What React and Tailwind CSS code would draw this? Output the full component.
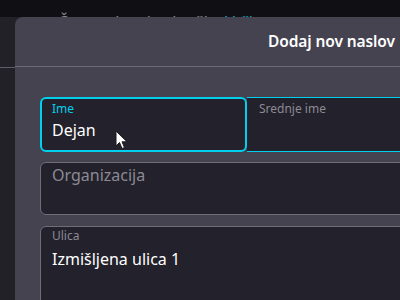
import React from 'react'

function Field({ label, value, placeholder, active, className = '' }) {
  return (
    <div
      className={`flex flex-col bg-[#23212b] rounded-md ${active ? 'border-2 border-[#00cfee] px-[10px] pt-[2px]' : 'border border-[#6f6d78] px-[11px] pt-px'} ${className}`}
    >
      {label && (
        <span className={`text-[12px] leading-[16px] ${active ? 'text-[#00cfee]' : 'text-[#8c8a94]'}`}>{label}</span>
      )}
      {value && (
        <span className={`${active ? 'mt-[2px]' : 'mt-[4px]'} text-[16px] leading-[22px] text-white`}>{value}</span>
      )}
      {placeholder && <span className="text-[16px] leading-[22px] text-[#8c8a94]">{placeholder}</span>}
    </div>
  )
}

function Cursor() {
  return (
    <svg className="absolute left-[115px] top-[130px]" width="16" height="22" viewBox="0 0 16 22">
      <path d="M1 1 L1 16 L4.5 12.5 L7 18.5 L9.5 17.5 L7 11.8 L12 11.8 Z" fill="#ffffff" stroke="#1a1a1a" strokeWidth="1" strokeLinejoin="round" />
    </svg>
  )
}

export default function App() {
  return (
    <div
      className="relative w-[400px] h-[300px] overflow-hidden bg-[#222128]"
      style={{ fontFamily: '"Noto Sans", "Open Sans", sans-serif' }}
    >
      {/* page behind the dialog */}
      <div className="h-[17px] bg-[#0f0f14] overflow-hidden">
        <div className="pl-[58px] pt-[14px] text-[16px] leading-none text-[#8a8a92] whitespace-nowrap">
          Čez naslovnico bo šla: <span className="text-[#0aa6b8]">Vrčkova</span>
        </div>
      </div>
      <div className="h-[50px]" />
      <div className="border-t border-[#5e5c66]" />

      {/* dialog */}
      <div className="absolute left-[15px] top-[17px] w-[520px] h-[320px] rounded-tl-lg bg-[#45434f]">
        <div className="h-[50px] border-b border-[#6b6975] flex items-center pl-[253px]">
          <span className="text-[15.5px] font-semibold text-white tracking-[-0.1px]">Dodaj nov naslov</span>
        </div>
        <div className="pl-[25px] pt-[30px] flex flex-col">
          <div className="flex h-[55px]">
            <Field label="Ime" value="Dejan" active className="w-[207px] shrink-0" />
            <div className="flex-1 flex flex-col bg-[#23212b] border-y border-r border-[#00cfee] px-[12px] pt-[3px]">
              <span className="text-[12px] leading-[16px] text-[#8c8a94]">Srednje ime</span>
            </div>
          </div>
          <Field placeholder="Organizacija" className="h-[53px] mt-[10px]" />
          <Field label="Ulica" value="Izmišljena ulica 1" className="h-[90px] mt-[11px]" />
        </div>
      </div>

      <Cursor />
    </div>
  )
}
